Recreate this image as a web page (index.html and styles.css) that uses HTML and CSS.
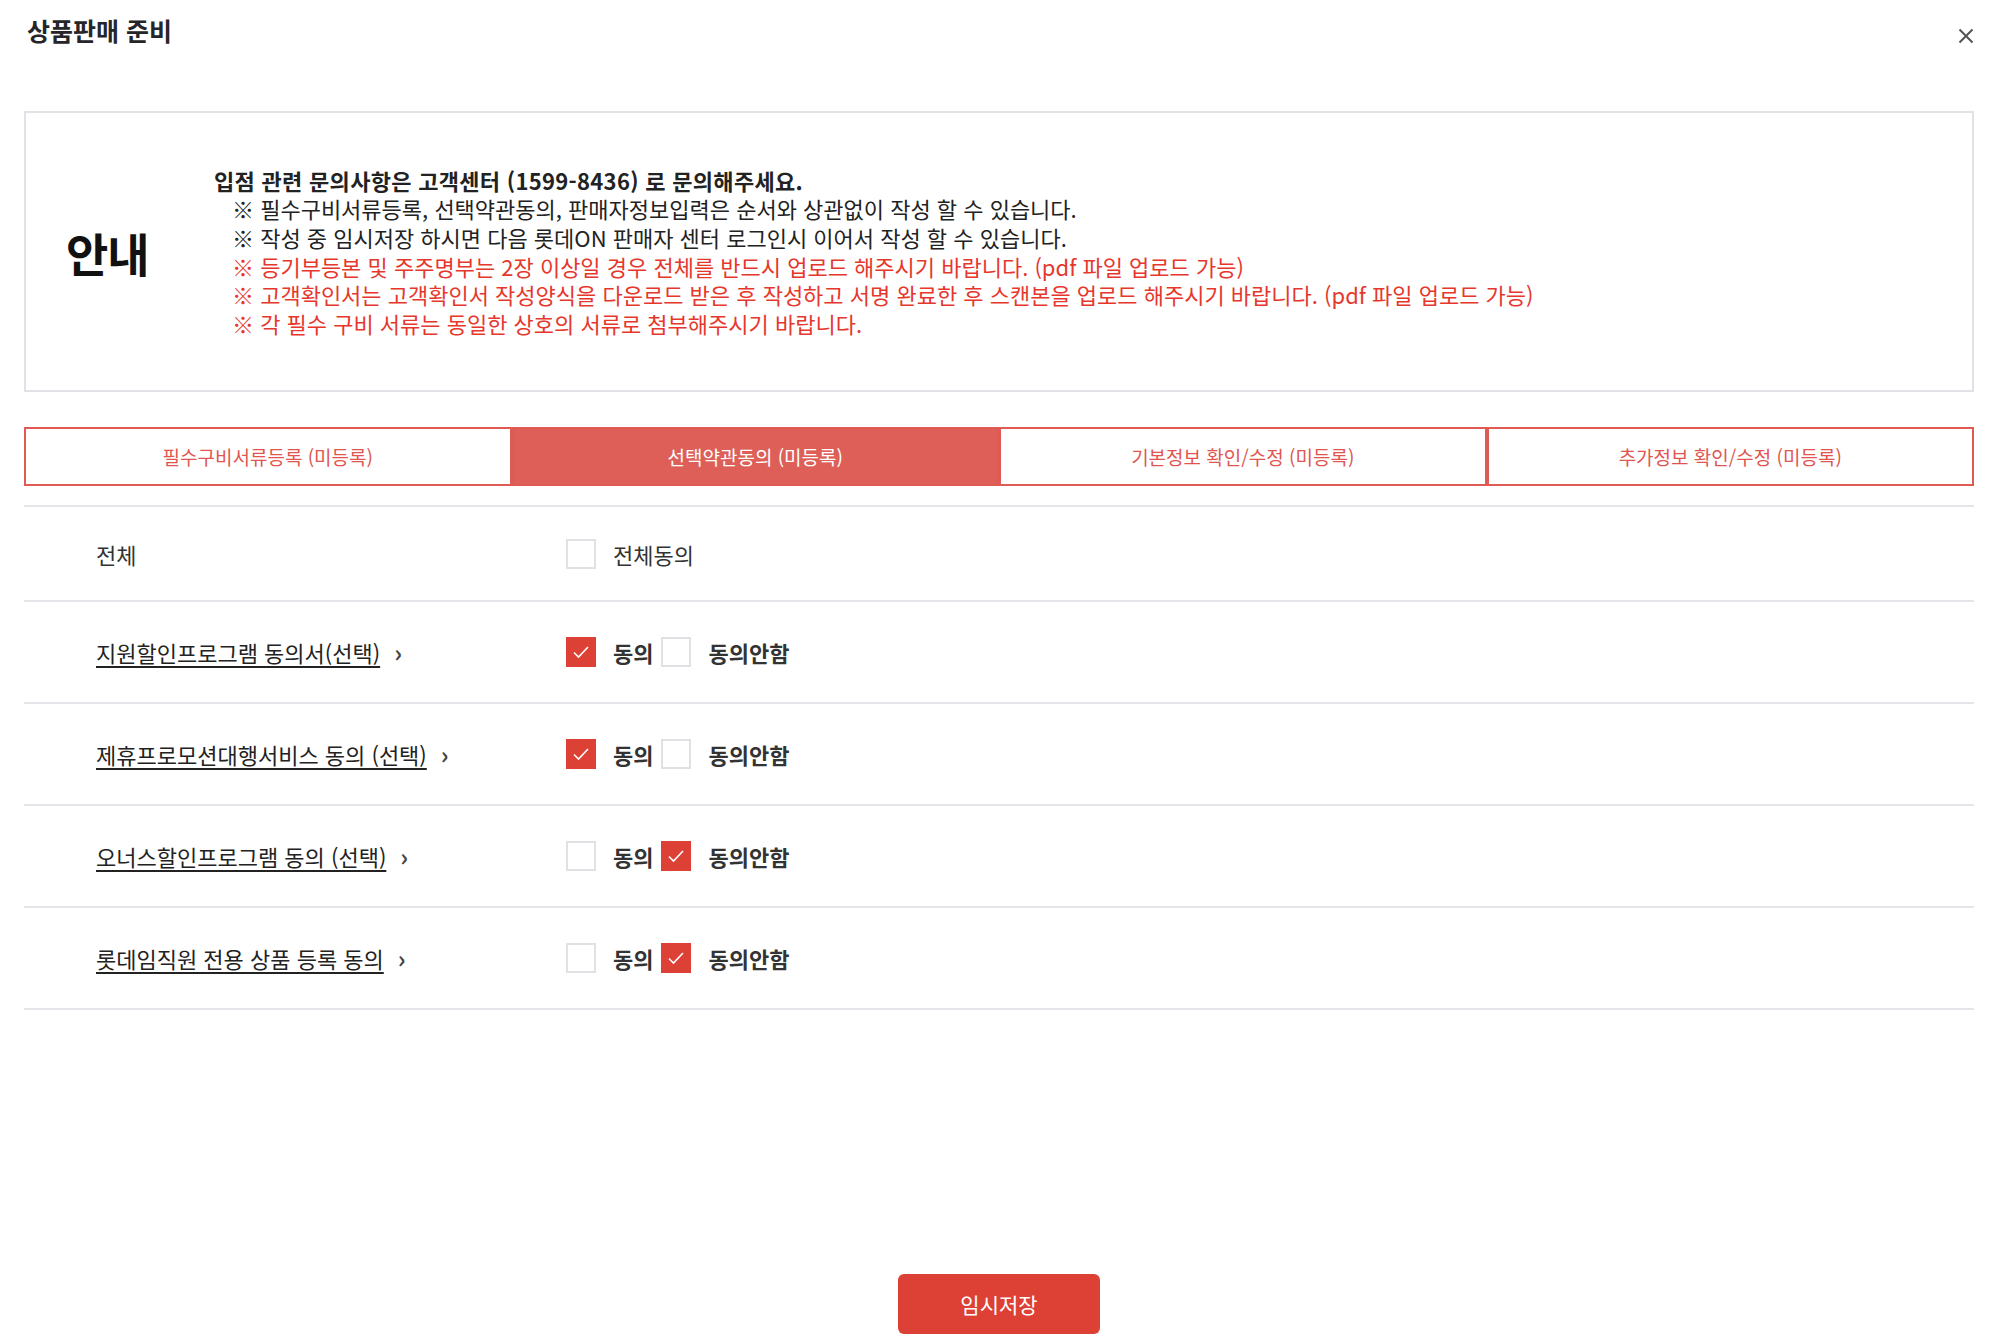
FILE: index.html
```html
<!DOCTYPE html>
<html lang="ko">
<head>
    <meta charset="UTF-8">
    <meta name="viewport" content="width=device-width, initial-scale=1.0">
    <title>상품판매 준비</title>
    <link rel="stylesheet" href="styles.css">
</head>
<body>
    <div class="popup">
        <!-- Header -->
        <div class="popup-header">
            <h1 class="popup-title">상품판매 준비</h1>
            <button class="btn-close" aria-label="닫기">
                <svg width="16" height="16" viewBox="0 0 16 16">
                    <path d="M1.5 1.5 L14.5 14.5 M14.5 1.5 L1.5 14.5" stroke="#555" stroke-width="2" fill="none"/>
                </svg>
            </button>
        </div>

        <!-- Guide Box -->
        <div class="guide-box">
            <strong class="guide-label">안내</strong>
            <div class="guide-text">
                <p class="guide-lead">입점 관련 문의사항은 고객센터 (1599-8436) 로 문의해주세요.</p>
                <ul class="guide-list">
                    <li>※ 필수구비서류등록, 선택약관동의, 판매자정보입력은 순서와 상관없이 작성 할 수 있습니다.</li>
                    <li>※ 작성 중 임시저장 하시면 다음 롯데ON 판매자 센터 로그인시 이어서 작성 할 수 있습니다.</li>
                    <li class="warn">※ 등기부등본 및 주주명부는 2장 이상일 경우 전체를 반드시 업로드 해주시기 바랍니다. (pdf 파일 업로드 가능)</li>
                    <li class="warn">※ 고객확인서는 고객확인서 작성양식을 다운로드 받은 후 작성하고 서명 완료한 후 스캔본을 업로드 해주시기 바랍니다. (pdf 파일 업로드 가능)</li>
                    <li class="warn">※ 각 필수 구비 서류는 동일한 상호의 서류로 첨부해주시기 바랍니다.</li>
                </ul>
            </div>
        </div>

        <!-- Step Tabs -->
        <ul class="step-tabs">
            <li>필수구비서류등록 (미등록)</li>
            <li class="active">선택약관동의 (미등록)</li>
            <li>기본정보 확인/수정 (미등록)</li>
            <li>추가정보 확인/수정 (미등록)</li>
        </ul>

        <!-- Agreement Table -->
        <div class="agree-table">
            <div class="agree-row first">
                <div class="agree-head">전체</div>
                <div class="agree-options">
                    <span class="chk"></span>
                    <span class="opt-label normal">전체동의</span>
                </div>
            </div>

            <div class="agree-row">
                <div class="agree-head"><a href="#" class="agree-link">지원할인프로그램 동의서(선택)</a><span class="chevron">›</span></div>
                <div class="agree-options">
                    <span class="chk checked"><svg width="30" height="30" viewBox="0 0 30 30"><path d="M8 15.5 L12.5 20 L22 10" stroke="#fff" stroke-width="1.6" fill="none"/></svg></span>
                    <span class="opt-label">동의</span>
                    <span class="chk"></span>
                    <span class="opt-label">동의안함</span>
                </div>
            </div>

            <div class="agree-row">
                <div class="agree-head"><a href="#" class="agree-link">제휴프로모션대행서비스 동의 (선택)</a><span class="chevron">›</span></div>
                <div class="agree-options">
                    <span class="chk checked"><svg width="30" height="30" viewBox="0 0 30 30"><path d="M8 15.5 L12.5 20 L22 10" stroke="#fff" stroke-width="1.6" fill="none"/></svg></span>
                    <span class="opt-label">동의</span>
                    <span class="chk"></span>
                    <span class="opt-label">동의안함</span>
                </div>
            </div>

            <div class="agree-row">
                <div class="agree-head"><a href="#" class="agree-link">오너스할인프로그램 동의 (선택)</a><span class="chevron">›</span></div>
                <div class="agree-options">
                    <span class="chk"></span>
                    <span class="opt-label">동의</span>
                    <span class="chk checked"><svg width="30" height="30" viewBox="0 0 30 30"><path d="M8 15.5 L12.5 20 L22 10" stroke="#fff" stroke-width="1.6" fill="none"/></svg></span>
                    <span class="opt-label">동의안함</span>
                </div>
            </div>

            <div class="agree-row">
                <div class="agree-head"><a href="#" class="agree-link">롯데임직원 전용 상품 등록 동의</a><span class="chevron">›</span></div>
                <div class="agree-options">
                    <span class="chk"></span>
                    <span class="opt-label">동의</span>
                    <span class="chk checked"><svg width="30" height="30" viewBox="0 0 30 30"><path d="M8 15.5 L12.5 20 L22 10" stroke="#fff" stroke-width="1.6" fill="none"/></svg></span>
                    <span class="opt-label">동의안함</span>
                </div>
            </div>
        </div>

        <!-- Footer -->
        <div class="popup-footer">
            <button class="btn-save">임시저장</button>
        </div>
    </div>
</body>
</html>
```

FILE: styles.css
```css
/* Global */
body {
    margin: 0;
    padding: 0;
    background: #fff;
    color: #222;
    font-family: "Noto Sans CJK KR", "Noto Sans", sans-serif;
}

ul {
    margin: 0;
    padding: 0;
    list-style: none;
}

p {
    margin: 0;
}

/* Popup */
.popup {
    padding: 0 26px 0 24px;
}

.popup-header {
    display: flex;
    justify-content: space-between;
    align-items: flex-start;
    height: 99px;
    padding-top: 12px;
}

.popup-title {
    margin: 0 0 0 3px;
    font-size: 25px;
    line-height: 36px;
    font-weight: 700;
    color: #26262a;
}

.btn-close {
    margin-top: 16px;
    padding: 0;
    border: none;
    background: none;
    line-height: 0;
    cursor: pointer;
}

/* Guide Box */
.guide-box {
    display: flex;
    align-items: center;
    box-sizing: border-box;
    height: 281px;
    border: 2px solid #e0e2e7;
    padding-left: 40px;
}

.guide-label {
    width: 148px;
    flex-shrink: 0;
    font-size: 46px;
    font-weight: 700;
    color: #111;
    letter-spacing: -1px;
}

.guide-text {
    font-size: 22px;
    line-height: 28.6px;
    color: #222;
}

.guide-lead {
    font-weight: 700;
    letter-spacing: 0.3px;
}

.guide-list li {
    padding-left: 18px;
}

.guide-list li.warn {
    color: #e6372d;
}

/* Step Tabs */
.step-tabs {
    display: grid;
    grid-template-columns: repeat(4, 1fr);
    margin-top: 35px;
}

.step-tabs li {
    height: 55px;
    border: 2px solid #df5a52;
    display: flex;
    align-items: center;
    justify-content: center;
    font-size: 19px;
    color: #e0564f;
}

.step-tabs li.active {
    background: #dd5f58;
    color: #fff;
}

/* Agreement Table */
.agree-table {
    margin-top: 19px;
    border-top: 2px solid #e3e5e9;
}

.agree-row {
    display: flex;
    align-items: center;
    height: 100px;
    border-bottom: 2px solid #e3e5e9;
}

.agree-row.first {
    height: 93px;
}

.agree-head {
    display: flex;
    align-items: center;
    box-sizing: border-box;
    width: 542px;
    padding-left: 72px;
    font-size: 22px;
    color: #333;
}

.agree-link {
    color: #222;
    text-decoration: underline;
    text-underline-offset: 4px;
}

.chevron {
    margin-left: 14px;
    font-size: 24px;
    font-weight: 700;
    color: #444;
    line-height: 1;
}

.agree-options {
    display: flex;
    align-items: center;
}

.chk {
    display: inline-block;
    box-sizing: border-box;
    width: 30px;
    height: 30px;
    border: 2px solid #dfe1e5;
    background: #fff;
    line-height: 0;
}

.chk.checked {
    border: none;
    background: #dd4035;
}

.opt-label {
    margin: 0 8px 0 17px;
    font-size: 22px;
    font-weight: 700;
    color: #333;
}

.opt-label.normal {
    font-weight: 400;
}

/* Footer */
.popup-footer {
    display: flex;
    justify-content: center;
    padding-top: 264px;
}

.btn-save {
    width: 202px;
    height: 60px;
    border: none;
    border-radius: 6px;
    background: #dd4035;
    color: #fff;
    font-family: inherit;
    font-size: 21px;
    cursor: pointer;
}
```
